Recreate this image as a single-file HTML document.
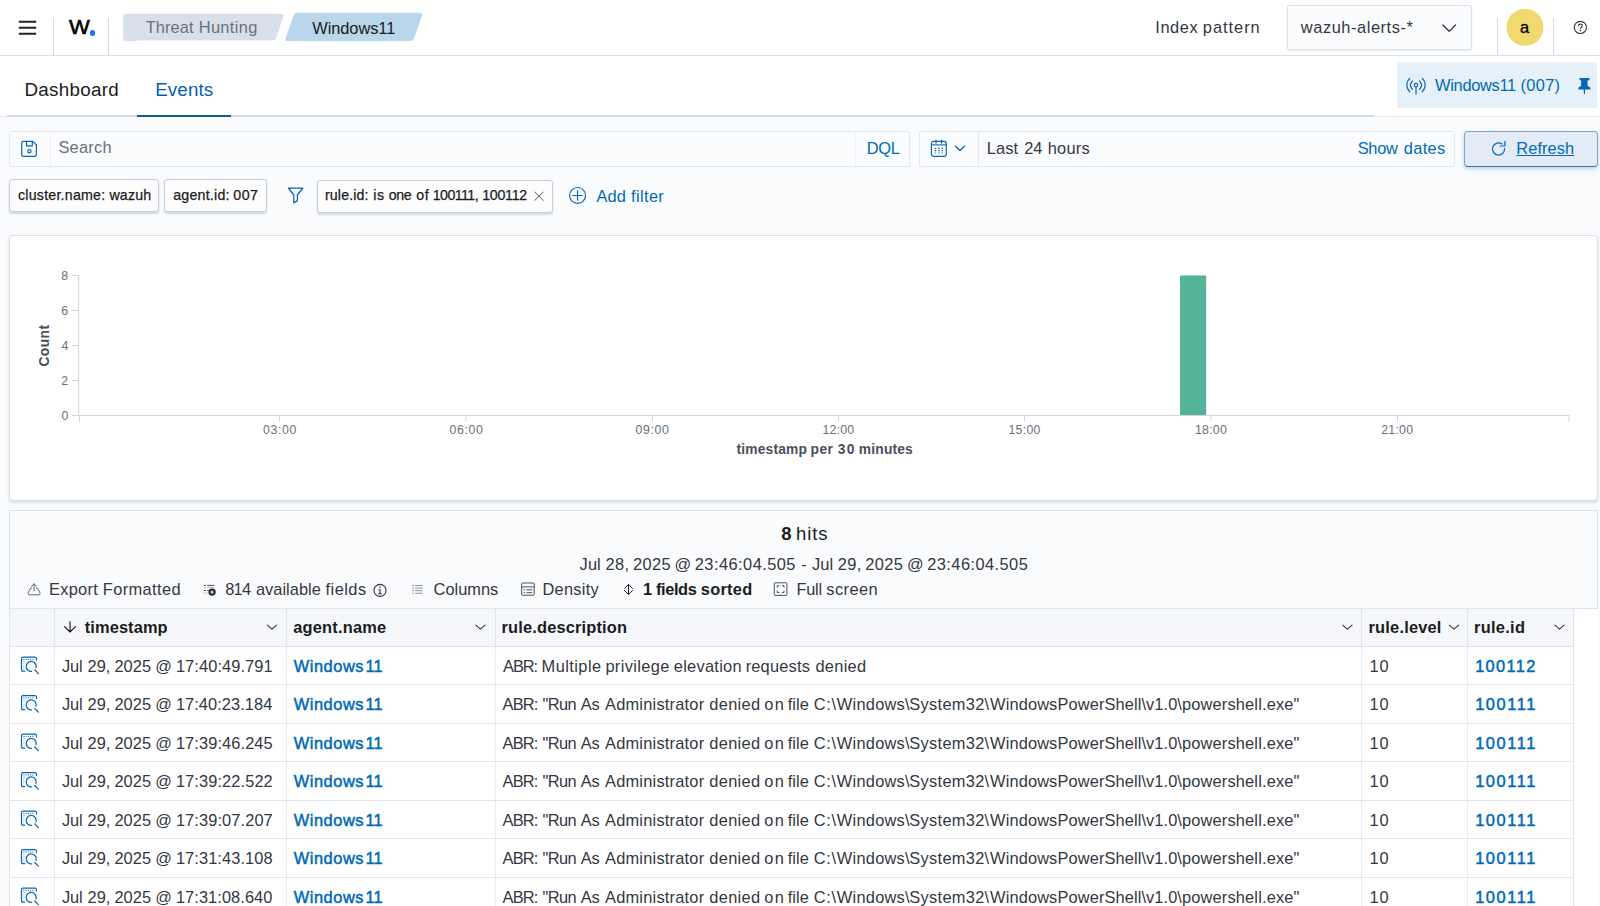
<!DOCTYPE html>
<html lang="en">
<head>
<meta charset="utf-8">
<title>Threat Hunting - Windows11 - Events</title>
<style>
html,body{margin:0;padding:0;}
body{width:1600px;height:906px;overflow:hidden;background:#fafbfd;font-family:"Liberation Sans",Arial,sans-serif;position:relative;}
#app{position:absolute;left:0;top:0;width:1600px;height:906px;overflow:hidden;}
#app div,#app span.t,#app svg{position:absolute;box-sizing:border-box;}
.t{white-space:pre;line-height:1;}
.ic{overflow:visible;}
/* header */
#hdr{left:0;top:0;width:1600px;height:56px;background:#fff;border-bottom:1px solid #d9e0ea;}
.vsep{width:1px;background:#d3dae6;top:18px;height:37px;}
#tabsbg{left:0;top:56px;width:1600px;height:61px;background:#fff;border-bottom:1px solid #e1e6ee;}
#tabline{left:7px;top:115px;width:1367px;height:2px;background:#d6dde8;}
#tabsel{left:137px;top:115px;width:94px;height:2px;background:#0f56ab;}
#agentpill{left:1397.2px;top:62.3px;width:200.3px;height:45.5px;background:#e6f0f8;}
#idxsel{left:1286.6px;top:5px;width:185.2px;height:45px;background:#fbfcfd;border:1px solid #dde3ec;border-radius:2px;box-shadow:0 1px 2px rgba(152,162,179,.25);}
#avatar{left:1506.6px;top:9px;width:36.7px;height:36.7px;border-radius:50%;background:#f1d86f;}
/* search row */
.box{background:#fbfcfd;border:1px solid #e3e8ef;border-radius:2px;}
#qbar{left:9.3px;top:130.5px;width:900.7px;height:36px;}
#dbar{left:919px;top:130.5px;width:535.5px;height:36px;}
.bsep{width:1px;background:#e3e8ef;top:131px;height:35px;}
#refresh{left:1464.3px;top:130.6px;width:133.9px;height:36.2px;background:#e3ecf6;border:1px solid #78a5d2;border-bottom-color:#2a7cc4;border-radius:4px;box-shadow:0 2px 4px rgba(40,80,130,.25);}
.pill{top:179px;height:33px;background:#fdfdfe;border:1px solid #c8d0dc;border-radius:3px;box-shadow:0 1.5px 2px rgba(110,125,150,.28);}
/* panels */
#chart{left:9.1px;top:235px;width:1589.3px;height:266px;background:#fff;border:1px solid #d9e0ea;border-radius:4px;box-shadow:0 2px 3px rgba(152,162,179,.35);}
#tpanel{left:9px;top:510px;width:1589px;height:420px;background:#fff;border-left:1px solid #dfe5ee;}
#tbar{left:9px;top:510px;width:1589px;height:98.6px;background:#fafbfd;border:1px solid #dbe1ea;}
#thead{left:10px;top:607.5px;width:1563.5px;height:39.1px;background:#f5f7fa;border-top:1.3px solid #e0e5ee;border-bottom:1.4px solid #dce2ec;}
#tright{left:1573px;top:608px;width:1px;height:300px;background:#dfe5ee;}
.vl{width:1px;background:#e8ecf2;top:646.4px;height:262px;}
.vh{width:1px;background:#dfe4ed;top:608.5px;height:37.5px;}
.hl{left:10px;width:1563.5px;height:1.2px;background:#e1e6ee;}
</style>
</head>
<body>
<div id="app">

<!-- ============ top header ============ -->
<div id="hdr"></div>
<svg class="ic" style="left:18px;top:20px" width="18" height="16" viewBox="-0.8 0 18 16"><path d="M0 1.8h17.4M0 7.7h17.4M0 13.7h17.4" stroke="#1f232b" stroke-width="2" fill="none"/></svg>
<div class="vsep" style="left:53px"></div>
<span class="t" style="left:69.1px;top:17.4px;font-size:20.6px;font-weight:400;color:#000;-webkit-text-stroke:0.6px #000;transform:scaleX(1.07);transform-origin:0 0">W</span>
<div style="left:90.2px;top:30.4px;width:5.2px;height:5.2px;border-radius:50%;background:#1a73ff"></div>
<div class="vsep" style="left:108px"></div>
<svg class="ic" style="left:120px;top:10px" width="310" height="34" viewBox="120 10 310 34">
  <path d="M126.2 13.8H281.1Q284.4 13.8 283.3 16.8L276.4 37.5Q275.4 40.5 272.2 40.5H126.2Q123.2 40.5 123.2 37.5V16.8Q123.2 13.8 126.2 13.8Z" fill="#d9dfea"/>
  <rect x="124.6" y="39.4" width="12" height="1.75" rx=".8" fill="#d9dfea"/>
  <path d="M297.6 12.8H419.6Q423 12.8 421.9 16L414.2 38.1Q413.2 41.1 410 41.1H288Q284.6 41.1 285.7 37.9L293.4 15.8Q294.4 12.8 297.6 12.8Z" fill="#b9d6ea"/>
</svg>
<div id="idxsel"></div>
<svg class="ic" style="left:1441px;top:22px" width="16" height="12" viewBox="-0.4 -0.2 16 12"><path d="M1.5 2.8L7.8 9L14.1 2.8" stroke="#343741" stroke-width="1.3" fill="none" stroke-linecap="round" stroke-linejoin="round"/></svg>
<div class="vsep" style="left:1497px"></div>
<svg class="ic" style="left:1500px;top:4px" width="50" height="48" viewBox="0 0 50 48"><circle cx="25" cy="23.4" r="18.45" fill="#f1d86f"/></svg>
<div class="vsep" style="left:1553px"></div>
<svg class="ic" style="left:1572px;top:19px" width="15" height="15" viewBox="-0.85 -0.95 15 15"><circle cx="7.5" cy="7.5" r="6.1" stroke="#343741" stroke-width="1.1" fill="none"/><path d="M5.6 6.1c0-1.1.8-1.9 1.9-1.9s1.9.7 1.9 1.7c0 1.3-1.8 1.5-1.8 2.9" stroke="#343741" stroke-width="1.1" fill="none" stroke-linecap="round"/><circle cx="7.55" cy="10.6" r=".75" fill="#343741"/></svg>

<!-- ============ tabs row ============ -->
<div id="tabsbg"></div>
<svg class="ic" style="left:0px;top:112px" width="1380" height="8" viewBox="0 0 1380 8"><path d="M7 4.1H1374" stroke="#cdd5e2" stroke-width="1.5" fill="none"/></svg>
<div id="tabsel"></div>
<div id="agentpill"></div>
<svg class="ic" style="left:1405px;top:76px" width="21" height="19" viewBox="-0.5 0 21 19" fill="none" stroke="#0a66b5" stroke-width="1.15" stroke-linecap="round">
  <circle cx="10.5" cy="9.1" r="1.75"/><path d="M10.5 10.9V18"/>
  <path d="M6.89 4.95A5.5 5.5 0 0 0 6.89 13.25M14.11 4.95A5.5 5.5 0 0 1 14.11 13.25"/>
  <path d="M4.26 2.41A9.15 9.15 0 0 0 4.26 15.79M16.74 2.41A9.15 9.15 0 0 1 16.74 15.79"/>
</svg>
<svg class="ic" style="left:1577px;top:77px" width="14" height="18" viewBox="-0.5 -0.5 14 18"><path d="M2.1.4h9.9v2.2l-1.9.4v5.3l2.8 1.9v1.9H7.5v4l-.6.8-.6-.8v-4H.8v-1.9l2.8-1.9V3l-1.5-.4z" fill="#0a66b5"/></svg>

<!-- ============ query bar ============ -->
<div id="qbar" class="box"></div>
<div class="bsep" style="left:50px;background:#eceff5"></div>
<div class="bsep" style="left:855px;background:#eef1f6"></div>
<svg class="ic" style="left:20px;top:140px" width="18" height="17" viewBox="-0.9 -0.6 18 17" fill="none" stroke="#0a66b5" stroke-width="1.2" stroke-linejoin="round"><path d="M2.5.8h9.3l3.7 3.6v9.6q0 1.8-1.7 1.8H2.5Q.8 15.8.8 14V2.6Q.8.8 2.5.8z"/><path d="M5.6 1v4.2h5.8V1"/><circle cx="8.5" cy="10.6" r="1.65"/></svg>
<div id="dbar" class="box"></div>
<div class="bsep" style="left:978px"></div>
<svg class="ic" style="left:930px;top:139px" width="18" height="19" viewBox="0 0 18 19" fill="none" stroke="#0a66b5" stroke-width="1.2"><rect x="1.4" y="2.45" width="14.9" height="14.85" rx="2.2"/><path d="M1.4 5.9h14.9" stroke-width="1.1"/><path d="M6 1.2v2.8M11.6 1.2v2.8" stroke-linecap="round" stroke-width="1.3"/><path d="M4.6 9.4h1.5M8.1 9.4h1.5M11.6 9.4h1.5M4.6 11.6h1.5M8.1 11.6h1.5M11.6 11.6h1.5" stroke-width="1.1"/><path d="M4.6 13.8h1.5M8.1 13.8h1.5M11.6 13.8h1.5" stroke-width="1.3" opacity=".55"/></svg>
<svg class="ic" style="left:954px;top:144px" width="12" height="8" viewBox="-0.4 -0.7 12 8"><path d="M1 1.6L5.5 5.8L10 1.6" stroke="#0a66b5" stroke-width="1.3" fill="none" stroke-linecap="round" stroke-linejoin="round"/></svg>
<div id="refresh"></div>
<svg class="ic" style="left:1490px;top:140px" width="17" height="17" viewBox="-0.5 0 17 17" fill="none" stroke="#0a66b5" stroke-width="1.2" stroke-linecap="round" stroke-linejoin="round"><path d="M11.55 3.96A6.1 6.1 0 1 0 14.14 8.64"/><path d="M14.4 1.3v4.7H9.7"/></svg>

<!-- ============ filter bar ============ -->
<div class="pill" style="left:9.3px;width:150.2px"></div>
<div class="pill" style="left:164.4px;width:102.5px"></div>
<svg class="ic" style="left:287px;top:187px" width="16" height="18" viewBox="-0.5 0 16 18"><path d="M.9 1h14.4L9.9 8v5.9L6.3 15.9V8z" fill="none" stroke="#0a66b5" stroke-width="1.25" stroke-linejoin="round"/></svg>
<div class="pill" style="left:317.2px;width:236.2px;top:179.6px"></div>
<svg class="ic" style="left:534px;top:191px" width="10" height="10" viewBox="0 -0.2 10 10"><path d="M.8.8l8.4 8.4M9.2.8L.8 9.2" stroke="#535966" stroke-width="1" stroke-linecap="round"/></svg>
<svg class="ic" style="left:568px;top:186px" width="18" height="18" viewBox="-0.55 -0.45 18 18" fill="none" stroke="#0a66b5" stroke-width="1.15" stroke-linecap="round"><circle cx="9" cy="9" r="7.95"/><path d="M9 4.2v9.6M4.2 9h9.6"/></svg>

<!-- ============ chart ============ -->
<div id="chart"></div>
<svg class="ic" style="left:0;top:235px" width="1600" height="266" viewBox="0 235 1600 266">
  <g stroke="#d4d6d9" stroke-width="1" fill="none">
    <path d="M78.6 275V415.5"/>
    <path d="M72 275.5H79M72 310.5H79M72 345.5H79M72 380.5H79M72 415.5H79"/>
    <path d="M79 415.5H1569.5"/>
    <path d="M79.5 415.5V422M279.5 415.5V421.5M466 415.5V421.5M652.5 415.5V421.5M838.5 415.5V421.5M1024.5 415.5V421.5M1211 415.5V421.5M1397.5 415.5V421.5M1569 415.5V422"/>
  </g>
  <rect x="1180" y="275.5" width="26.2" height="139.5" fill="#54b399"/>
  <text x="0" y="0" transform="translate(48.6 366.5) rotate(-90)" font-family="Liberation Sans, Arial, sans-serif" font-size="13.8" font-weight="700" fill="#4a4f5c" textLength="41.5" lengthAdjust="spacing">Count</text>
</svg>

<!-- ============ table ============ -->
<div id="tpanel"></div>
<div id="tbar"></div>
<div id="thead"></div>
<div class="vh" style="left:53.5px"></div><div class="vh" style="left:286px"></div><div class="vh" style="left:495px"></div><div class="vh" style="left:1361px"></div><div class="vh" style="left:1467px"></div>
<div class="vl" style="left:53.5px"></div><div class="vl" style="left:286px"></div><div class="vl" style="left:495px"></div><div class="vl" style="left:1361px"></div><div class="vl" style="left:1467px"></div>
<div id="tright"></div>
<div class="hl" style="top:684.00px"></div>
<div class="hl" style="top:722.50px"></div>
<div class="hl" style="top:761.00px"></div>
<div class="hl" style="top:799.50px"></div>
<div class="hl" style="top:838.00px"></div>
<div class="hl" style="top:876.50px"></div>

<!-- toolbar icons -->
<svg class="ic" style="left:27px;top:583px" width="14" height="13" viewBox="-0.3 0 14 13" fill="none" stroke="#5f6673" stroke-width="1" stroke-linecap="round" stroke-linejoin="round"><path d="M4.4 5.2H3.2L.9 9.6v1.3q0 .9.9.9h9.9q.9 0 .9-.9V9.6L10.3 5.2H9.1"/><path d="M6.75 8V.9M4.3 3.3L6.75.8l2.45 2.5"/></svg>
<svg class="ic" style="left:203px;top:583px" width="13" height="13" viewBox="-0.5 -0.5 13 13" fill="none" stroke="#343741" stroke-width=".9"><path d="M.4 1.9h2M3.6 1.9h7.1M.4 7h2M3.6 7h1.8"/><path d="M.4 4.1h2M3.6 4.1h7.1M.4 9.5h2M3.6 9.5h1" opacity=".4"/><circle cx="8.6" cy="8.6" r="2.65" stroke="#2a2d35" stroke-width="2.1" fill="#c3c7ce"/></svg>
<svg class="ic" style="left:373px;top:583px" width="14" height="14" viewBox="0 -0.4 14 14" fill="none" stroke="#343741" stroke-width="1.1"><circle cx="7" cy="7" r="6"/><path d="M7 6.2v4M5.8 6.4H7M5.6 10.4h2.8" stroke-linecap="round"/><circle cx="7" cy="3.9" r=".8" fill="#343741" stroke="none"/></svg>
<svg class="ic" style="left:411px;top:584px" width="12" height="10" viewBox="-0.8 -0.6 12 10" fill="none" stroke="#7b828e" stroke-width=".9"><path d="M.4 1h1.5M3.4 1h7.4M.4 3.55h1.5M3.4 3.55h7.4M.4 6.1h1.5M3.4 6.1h7.4M.4 8.65h1.5M3.4 8.65h7.4"/></svg>
<svg class="ic" style="left:521px;top:582px" width="14" height="14" viewBox="0 -0.3 14 14" fill="none" stroke="#4a505c" stroke-width="1"><rect x=".7" y=".7" width="12.5" height="12.2" rx=".7"/><path d="M.7 4.6h12.5M2.6 7.5h1.4M5.4 7.5h5.8M2.6 10.4h1.4M5.4 10.4h5.8"/></svg>
<svg class="ic" style="left:624px;top:583px" width="9" height="13" viewBox="0 0 9 13" fill="none" stroke="#1a1c21" stroke-width="1" stroke-linecap="round" stroke-linejoin="round"><path d="M4.5 1.6v9.7M.5 5.4L4.5 1.4l4 4M.5 7.5l4 4 4-4"/></svg>
<svg class="ic" style="left:773px;top:582px" width="14" height="14" viewBox="-0.6 -0.1 14 14" fill="none" stroke="#4a505c" stroke-width="1"><rect x=".7" y=".7" width="12.6" height="12.6" rx=".7"/><path d="M3.6 5.6v-2h2M8.4 3.6h2v2M10.4 8.4v2h-2M5.6 10.4h-2v-2"/></svg>

<!-- header icons -->
<svg class="ic" style="left:63px;top:620px" width="13" height="13" viewBox="-0.6 -0.6 13 13" fill="none" stroke="#1a1c21" stroke-width="1.15" stroke-linecap="round" stroke-linejoin="round"><path d="M6.45 1.1v10.2M1 6l5.45 5.4L11.9 6"/></svg>
<svg class="ic hc" style="left:266px;top:623px" width="12" height="8" viewBox="-0.35 -0.4 12 8"><path d="M1 1.7L5.6 5.8L10.2 1.7" stroke="#343741" stroke-width="1.1" fill="none" stroke-linecap="round" stroke-linejoin="round"/></svg>
<svg class="ic hc" style="left:474px;top:623px" width="12" height="8" viewBox="-0.85 -0.4 12 8"><path d="M1 1.7L5.6 5.8L10.2 1.7" stroke="#343741" stroke-width="1.1" fill="none" stroke-linecap="round" stroke-linejoin="round"/></svg>
<svg class="ic hc" style="left:1341px;top:623px" width="12" height="8" viewBox="-0.85 -0.4 12 8"><path d="M1 1.7L5.6 5.8L10.2 1.7" stroke="#343741" stroke-width="1.1" fill="none" stroke-linecap="round" stroke-linejoin="round"/></svg>
<svg class="ic hc" style="left:1448px;top:623px" width="12" height="8" viewBox="-0.35 -0.4 12 8"><path d="M1 1.7L5.6 5.8L10.2 1.7" stroke="#343741" stroke-width="1.1" fill="none" stroke-linecap="round" stroke-linejoin="round"/></svg>
<svg class="ic hc" style="left:1553px;top:623px" width="12" height="8" viewBox="-0.85 -0.4 12 8"><path d="M1 1.7L5.6 5.8L10.2 1.7" stroke="#343741" stroke-width="1.1" fill="none" stroke-linecap="round" stroke-linejoin="round"/></svg>

<svg class="ic" style="left:20px;top:655px" width="19" height="19" viewBox="-0.7 -0.9 19 19" fill="none" stroke="#0a66b5" stroke-width="1.2" stroke-linecap="round"><path d="M3.9 15.3H2.4Q.8 15.3 .8 13.7V2.8Q.8 1.2 2.4 1.2H14.2Q15.8 1.2 15.8 2.8V4"/><path d="M2.6 3.5H13.4" stroke-dasharray="1.1 1.15" stroke-linecap="butt" stroke-width="1"/><path d="M2.4 5.6H4.4M2.4 7.8H3.8M2.4 10.3H3.8M2.4 12.5H3.8" stroke-width=".8" stroke-linecap="butt" opacity=".45"/><path d="M10.9 15.5A5 5 0 1 1 15.3 12"/><path d="M14.1 14.1L17.7 17.7"/></svg>
<svg class="ic" style="left:20px;top:694px" width="19" height="19" viewBox="-0.7 -0.4 19 19" fill="none" stroke="#0a66b5" stroke-width="1.2" stroke-linecap="round"><path d="M3.9 15.3H2.4Q.8 15.3 .8 13.7V2.8Q.8 1.2 2.4 1.2H14.2Q15.8 1.2 15.8 2.8V4"/><path d="M2.6 3.5H13.4" stroke-dasharray="1.1 1.15" stroke-linecap="butt" stroke-width="1"/><path d="M2.4 5.6H4.4M2.4 7.8H3.8M2.4 10.3H3.8M2.4 12.5H3.8" stroke-width=".8" stroke-linecap="butt" opacity=".45"/><path d="M10.9 15.5A5 5 0 1 1 15.3 12"/><path d="M14.1 14.1L17.7 17.7"/></svg>
<svg class="ic" style="left:20px;top:732px" width="19" height="19" viewBox="-0.7 -0.9 19 19" fill="none" stroke="#0a66b5" stroke-width="1.2" stroke-linecap="round"><path d="M3.9 15.3H2.4Q.8 15.3 .8 13.7V2.8Q.8 1.2 2.4 1.2H14.2Q15.8 1.2 15.8 2.8V4"/><path d="M2.6 3.5H13.4" stroke-dasharray="1.1 1.15" stroke-linecap="butt" stroke-width="1"/><path d="M2.4 5.6H4.4M2.4 7.8H3.8M2.4 10.3H3.8M2.4 12.5H3.8" stroke-width=".8" stroke-linecap="butt" opacity=".45"/><path d="M10.9 15.5A5 5 0 1 1 15.3 12"/><path d="M14.1 14.1L17.7 17.7"/></svg>
<svg class="ic" style="left:20px;top:771px" width="19" height="19" viewBox="-0.7 -0.4 19 19" fill="none" stroke="#0a66b5" stroke-width="1.2" stroke-linecap="round"><path d="M3.9 15.3H2.4Q.8 15.3 .8 13.7V2.8Q.8 1.2 2.4 1.2H14.2Q15.8 1.2 15.8 2.8V4"/><path d="M2.6 3.5H13.4" stroke-dasharray="1.1 1.15" stroke-linecap="butt" stroke-width="1"/><path d="M2.4 5.6H4.4M2.4 7.8H3.8M2.4 10.3H3.8M2.4 12.5H3.8" stroke-width=".8" stroke-linecap="butt" opacity=".45"/><path d="M10.9 15.5A5 5 0 1 1 15.3 12"/><path d="M14.1 14.1L17.7 17.7"/></svg>
<svg class="ic" style="left:20px;top:809px" width="19" height="19" viewBox="-0.7 -0.9 19 19" fill="none" stroke="#0a66b5" stroke-width="1.2" stroke-linecap="round"><path d="M3.9 15.3H2.4Q.8 15.3 .8 13.7V2.8Q.8 1.2 2.4 1.2H14.2Q15.8 1.2 15.8 2.8V4"/><path d="M2.6 3.5H13.4" stroke-dasharray="1.1 1.15" stroke-linecap="butt" stroke-width="1"/><path d="M2.4 5.6H4.4M2.4 7.8H3.8M2.4 10.3H3.8M2.4 12.5H3.8" stroke-width=".8" stroke-linecap="butt" opacity=".45"/><path d="M10.9 15.5A5 5 0 1 1 15.3 12"/><path d="M14.1 14.1L17.7 17.7"/></svg>
<svg class="ic" style="left:20px;top:848px" width="19" height="19" viewBox="-0.7 -0.4 19 19" fill="none" stroke="#0a66b5" stroke-width="1.2" stroke-linecap="round"><path d="M3.9 15.3H2.4Q.8 15.3 .8 13.7V2.8Q.8 1.2 2.4 1.2H14.2Q15.8 1.2 15.8 2.8V4"/><path d="M2.6 3.5H13.4" stroke-dasharray="1.1 1.15" stroke-linecap="butt" stroke-width="1"/><path d="M2.4 5.6H4.4M2.4 7.8H3.8M2.4 10.3H3.8M2.4 12.5H3.8" stroke-width=".8" stroke-linecap="butt" opacity=".45"/><path d="M10.9 15.5A5 5 0 1 1 15.3 12"/><path d="M14.1 14.1L17.7 17.7"/></svg>
<svg class="ic" style="left:20px;top:886px" width="19" height="19" viewBox="-0.7 -0.9 19 19" fill="none" stroke="#0a66b5" stroke-width="1.2" stroke-linecap="round"><path d="M3.9 15.3H2.4Q.8 15.3 .8 13.7V2.8Q.8 1.2 2.4 1.2H14.2Q15.8 1.2 15.8 2.8V4"/><path d="M2.6 3.5H13.4" stroke-dasharray="1.1 1.15" stroke-linecap="butt" stroke-width="1"/><path d="M2.4 5.6H4.4M2.4 7.8H3.8M2.4 10.3H3.8M2.4 12.5H3.8" stroke-width=".8" stroke-linecap="butt" opacity=".45"/><path d="M10.9 15.5A5 5 0 1 1 15.3 12"/><path d="M14.1 14.1L17.7 17.7"/></svg>

<!-- ============ all text ============ -->
<span class="t" style="left:145.75px;top:19.00px;font-size:16.4px;color:#69707d;"><span class="w" style="letter-spacing:0.064px;">Threat </span><span class="w" style="margin-left:0.64px;letter-spacing:0.333px;">Hunting</span></span>
<span class="t" style="left:312.26px;top:20.00px;font-size:16.4px;color:#1a1c21;letter-spacing:-0.062px;">Windows11</span>
<span class="t" style="left:1155.28px;top:19.00px;font-size:16.4px;color:#343741;"><span class="w" style="letter-spacing:0.559px;">Index </span><span class="w" style="margin-left:-0.45px;letter-spacing:0.969px;">pattern</span></span>
<span class="t" style="left:1300.82px;top:19.00px;font-size:16.4px;color:#343741;letter-spacing:0.561px;">wazuh-alerts-*</span>
<span class="t" style="left:1520.10px;top:19.00px;font-size:16.4px;color:#000;-webkit-text-stroke:0.3px #000;">a</span>
<span class="t" style="left:24.49px;top:81.00px;font-size:18.8px;color:#1a1c21;letter-spacing:0.303px;">Dashboard</span>
<span class="t" style="left:155.17px;top:81.00px;font-size:18.8px;color:#0361b0;letter-spacing:0.132px;">Events</span>
<span class="t" style="left:1435.10px;top:77.00px;font-size:16.4px;color:#006bb4;"><span class="w" style="letter-spacing:-0.304px;">Windows11 </span><span class="w" style="margin-left:0.47px;letter-spacing:0.301px;">(007)</span></span>
<span class="t" style="left:58.39px;top:139.00px;font-size:16.4px;color:#69707d;letter-spacing:0.258px;">Search</span>
<span class="t" style="left:866.84px;top:140.00px;font-size:16.4px;color:#006bb4;letter-spacing:-0.332px;">DQL</span>
<span class="t" style="left:986.77px;top:140.00px;font-size:16.4px;color:#343741;"><span class="w" style="letter-spacing:0.092px;">Last </span><span class="w" style="margin-left:1.53px;letter-spacing:-0.170px;">24 </span><span class="w" style="margin-left:1.09px;letter-spacing:0.294px;">hours</span></span>
<span class="t" style="left:1357.66px;top:140.00px;font-size:16.4px;color:#006bb4;"><span class="w" style="letter-spacing:-0.282px;">Show </span><span class="w" style="margin-left:1.94px;letter-spacing:0.326px;">dates</span></span>
<span class="t" style="left:1516.37px;top:140.00px;font-size:16.4px;color:#006bb4;letter-spacing:0.061px;text-decoration:underline;text-underline-offset:1.2px;text-decoration-thickness:1px;">Refresh</span>
<span class="t" style="left:17.97px;top:188.00px;font-size:14.2px;color:#1a1c21;-webkit-text-stroke:0.25px #1a1c21;"><span class="w" style="letter-spacing:0.236px;">cluster.name: </span><span class="w" style="margin-left:-0.16px;letter-spacing:0.176px;">wazuh</span></span>
<span class="t" style="left:173.23px;top:188.00px;font-size:14.2px;color:#1a1c21;-webkit-text-stroke:0.25px #1a1c21;"><span class="w" style="letter-spacing:0.224px;">agent.id: </span><span class="w" style="margin-left:-0.60px;letter-spacing:0.526px;">007</span></span>
<span class="t" style="left:324.91px;top:188.00px;font-size:14.2px;color:#1a1c21;-webkit-text-stroke:0.25px #1a1c21;"><span class="w" style="letter-spacing:0.151px;">rule.id: </span><span class="w" style="margin-left:0.46px;letter-spacing:0.604px;">is </span><span class="w" style="margin-left:-0.52px;letter-spacing:-0.350px;">one </span><span class="w" style="margin-left:1.31px;letter-spacing:0.597px;">of </span><span class="w" style="margin-left:-1.14px;letter-spacing:-0.540px;">100111, </span><span class="w" style="margin-left:0.64px;letter-spacing:-0.249px;">100112</span></span>
<span class="t" style="left:596.61px;top:188.00px;font-size:16.4px;color:#006bb4;"><span class="w" style="letter-spacing:0.057px;">Add </span><span class="w" style="margin-left:0.53px;letter-spacing:0.358px;">filter</span></span>
<span class="t" style="left:781.23px;top:525.00px;font-size:18.5px;font-weight:700;color:#1a1c21;"><span class="w" style="letter-spacing:-2.888px;">8 </span><span class="w" style="margin-left:5.16px;letter-spacing:0.925px;font-weight:400;">hits</span></span>
<span class="t" style="left:579.58px;top:556.00px;font-size:16.4px;color:#343741;"><span class="w" style="letter-spacing:0.103px;">Jul </span><span class="w" style="margin-left:0.03px;letter-spacing:0.362px;">28, </span><span class="w" style="margin-left:-1.42px;letter-spacing:0.440px;">2025 </span><span class="w" style="margin-left:-1.53px;letter-spacing:-5.013px;">@ </span><span class="w" style="margin-left:9.02px;letter-spacing:0.453px;">23:46:04.505 </span><span class="w" style="margin-left:0.25px;letter-spacing:-3.976px;">- </span><span class="w" style="margin-left:8.67px;letter-spacing:0.179px;">Jul </span><span class="w" style="margin-left:-0.37px;letter-spacing:0.318px;">29, </span><span class="w" style="margin-left:-1.12px;letter-spacing:0.344px;">2025 </span><span class="w" style="margin-left:-1.12px;letter-spacing:-5.063px;">@ </span><span class="w" style="margin-left:9.19px;letter-spacing:0.443px;">23:46:04.505</span></span>
<span class="t" style="left:49.02px;top:581.00px;font-size:16.4px;color:#343741;"><span class="w" style="letter-spacing:0.266px;">Export </span><span class="w" style="margin-left:0.03px;letter-spacing:0.386px;">Formatted</span></span>
<span class="t" style="left:225.14px;top:581.00px;font-size:16.4px;color:#343741;"><span class="w" style="letter-spacing:-0.616px;">814 </span><span class="w" style="margin-left:1.37px;letter-spacing:0.025px;">available </span><span class="w" style="margin-left:0.13px;letter-spacing:0.464px;">fields</span></span>
<span class="t" style="left:433.57px;top:581.00px;font-size:16.4px;color:#343741;letter-spacing:0.007px;">Columns</span>
<span class="t" style="left:542.54px;top:581.00px;font-size:16.4px;color:#343741;letter-spacing:0.253px;">Density</span>
<span class="t" style="left:642.95px;top:581.00px;font-size:16.4px;font-weight:700;color:#1a1c21;"><span class="w" style="letter-spacing:-5.532px;">1 </span><span class="w" style="margin-left:10.48px;letter-spacing:-0.399px;">fields </span><span class="w" style="margin-left:0.28px;letter-spacing:0.239px;">sorted</span></span>
<span class="t" style="left:796.54px;top:581.00px;font-size:16.4px;color:#343741;"><span class="w" style="letter-spacing:-0.272px;">Full </span><span class="w" style="margin-left:0.11px;letter-spacing:0.430px;">screen</span></span>
<span class="t" style="left:84.72px;top:619.00px;font-size:16.4px;font-weight:700;color:#1a1c21;letter-spacing:0.117px;">timestamp</span>
<span class="t" style="left:293.21px;top:619.00px;font-size:16.4px;font-weight:700;color:#1a1c21;letter-spacing:0.212px;">agent.name</span>
<span class="t" style="left:501.51px;top:619.00px;font-size:16.4px;font-weight:700;color:#1a1c21;letter-spacing:0.171px;">rule.description</span>
<span class="t" style="left:1368.51px;top:619.00px;font-size:16.4px;font-weight:700;color:#1a1c21;letter-spacing:0.205px;">rule.level</span>
<span class="t" style="left:1473.99px;top:619.00px;font-size:16.4px;font-weight:700;color:#1a1c21;letter-spacing:0.305px;">rule.id</span>
<span class="t" style="left:61.93px;top:658.00px;font-size:16.4px;color:#343741;"><span class="w" style="letter-spacing:-0.060px;">Jul </span><span class="w" style="margin-left:0.29px;letter-spacing:0.031px;">29, </span><span class="w" style="margin-left:-0.58px;letter-spacing:0.120px;">2025 </span><span class="w" style="margin-left:-0.84px;letter-spacing:-5.113px;">@ </span><span class="w" style="margin-left:9.76px;letter-spacing:0.096px;">17:40:49.791</span></span>
<span class="t" style="left:293.72px;top:658.00px;font-size:16.4px;color:#006bb4;-webkit-text-stroke:0.5px #006bb4;"><span class="w" style="letter-spacing:0.551px;">Windows</span><span class="w" style="margin-left:1.52px;letter-spacing:-0.063px;">11</span></span>
<span class="t" style="left:503.08px;top:658.00px;font-size:16.4px;color:#343741;"><span class="w" style="letter-spacing:-1.079px;">ABR: </span><span class="w" style="margin-left:1.04px;letter-spacing:0.446px;">Multiple </span><span class="w" style="margin-left:-1.21px;letter-spacing:0.383px;">privilege </span><span class="w" style="margin-left:-1.01px;letter-spacing:0.269px;">elevation </span><span class="w" style="margin-left:-1.04px;letter-spacing:0.203px;">requests </span><span class="w" style="margin-left:0.52px;letter-spacing:0.303px;">denied</span></span>
<span class="t" style="left:1369.56px;top:658.00px;font-size:16.4px;color:#343741;letter-spacing:0.865px;">10</span>
<span class="t" style="left:1475.16px;top:658.00px;font-size:16.4px;color:#006bb4;letter-spacing:1.344px;-webkit-text-stroke:0.5px #006bb4;">100112</span>
<span class="t" style="left:61.93px;top:696.00px;font-size:16.4px;color:#343741;"><span class="w" style="letter-spacing:-0.060px;">Jul </span><span class="w" style="margin-left:0.29px;letter-spacing:0.031px;">29, </span><span class="w" style="margin-left:-0.58px;letter-spacing:0.120px;">2025 </span><span class="w" style="margin-left:-0.84px;letter-spacing:-5.113px;">@ </span><span class="w" style="margin-left:9.76px;letter-spacing:0.062px;">17:40:23.184</span></span>
<span class="t" style="left:293.72px;top:696.00px;font-size:16.4px;color:#006bb4;-webkit-text-stroke:0.5px #006bb4;"><span class="w" style="letter-spacing:0.551px;">Windows</span><span class="w" style="margin-left:1.52px;letter-spacing:-0.063px;">11</span></span>
<span class="t" style="left:502.61px;top:696.00px;font-size:16.4px;color:#343741;"><span class="w" style="letter-spacing:-0.835px;">ABR: </span><span class="w" style="margin-left:1.33px;letter-spacing:-0.625px;">&quot;Run </span><span class="w" style="margin-left:0.96px;letter-spacing:-0.259px;">As </span><span class="w" style="margin-left:1.27px;letter-spacing:0.211px;">Administrator </span><span class="w" style="margin-left:0.18px;letter-spacing:0.331px;">denied </span><span class="w" style="margin-left:-1.19px;letter-spacing:1.426px;">on </span><span class="w" style="margin-left:-3.53px;letter-spacing:0.079px;">file </span><span class="w" style="margin-left:0.20px;letter-spacing:0.617px;">C:\</span><span class="w" style="margin-left:0.24px;letter-spacing:0.236px;">Windows\</span><span class="w" style="margin-left:-0.47px;letter-spacing:0.301px;">System32\</span><span class="w" style="margin-left:0.61px;letter-spacing:0.120px;">WindowsPowerShell\</span><span class="w" style="margin-left:-0.19px;letter-spacing:0.092px;">v1.0\</span><span class="w" style="margin-left:0.01px;letter-spacing:0.156px;">powershell.exe&quot;</span></span>
<span class="t" style="left:1369.56px;top:696.00px;font-size:16.4px;color:#343741;letter-spacing:0.865px;">10</span>
<span class="t" style="left:1475.16px;top:696.00px;font-size:16.4px;color:#006bb4;letter-spacing:1.571px;-webkit-text-stroke:0.5px #006bb4;">100111</span>
<span class="t" style="left:61.93px;top:735.00px;font-size:16.4px;color:#343741;"><span class="w" style="letter-spacing:-0.060px;">Jul </span><span class="w" style="margin-left:0.29px;letter-spacing:0.031px;">29, </span><span class="w" style="margin-left:-0.58px;letter-spacing:0.120px;">2025 </span><span class="w" style="margin-left:-0.84px;letter-spacing:-5.113px;">@ </span><span class="w" style="margin-left:9.76px;letter-spacing:0.101px;">17:39:46.245</span></span>
<span class="t" style="left:293.72px;top:735.00px;font-size:16.4px;color:#006bb4;-webkit-text-stroke:0.5px #006bb4;"><span class="w" style="letter-spacing:0.551px;">Windows</span><span class="w" style="margin-left:1.52px;letter-spacing:-0.063px;">11</span></span>
<span class="t" style="left:502.61px;top:735.00px;font-size:16.4px;color:#343741;"><span class="w" style="letter-spacing:-0.835px;">ABR: </span><span class="w" style="margin-left:1.33px;letter-spacing:-0.625px;">&quot;Run </span><span class="w" style="margin-left:0.96px;letter-spacing:-0.259px;">As </span><span class="w" style="margin-left:1.27px;letter-spacing:0.211px;">Administrator </span><span class="w" style="margin-left:0.18px;letter-spacing:0.331px;">denied </span><span class="w" style="margin-left:-1.19px;letter-spacing:1.426px;">on </span><span class="w" style="margin-left:-3.53px;letter-spacing:0.079px;">file </span><span class="w" style="margin-left:0.20px;letter-spacing:0.617px;">C:\</span><span class="w" style="margin-left:0.24px;letter-spacing:0.236px;">Windows\</span><span class="w" style="margin-left:-0.47px;letter-spacing:0.301px;">System32\</span><span class="w" style="margin-left:0.61px;letter-spacing:0.120px;">WindowsPowerShell\</span><span class="w" style="margin-left:-0.19px;letter-spacing:0.092px;">v1.0\</span><span class="w" style="margin-left:0.01px;letter-spacing:0.156px;">powershell.exe&quot;</span></span>
<span class="t" style="left:1369.56px;top:735.00px;font-size:16.4px;color:#343741;letter-spacing:0.865px;">10</span>
<span class="t" style="left:1475.16px;top:735.00px;font-size:16.4px;color:#006bb4;letter-spacing:1.571px;-webkit-text-stroke:0.5px #006bb4;">100111</span>
<span class="t" style="left:61.93px;top:773.00px;font-size:16.4px;color:#343741;"><span class="w" style="letter-spacing:-0.060px;">Jul </span><span class="w" style="margin-left:0.29px;letter-spacing:0.031px;">29, </span><span class="w" style="margin-left:-0.58px;letter-spacing:0.120px;">2025 </span><span class="w" style="margin-left:-0.84px;letter-spacing:-5.113px;">@ </span><span class="w" style="margin-left:9.76px;letter-spacing:0.102px;">17:39:22.522</span></span>
<span class="t" style="left:293.72px;top:773.00px;font-size:16.4px;color:#006bb4;-webkit-text-stroke:0.5px #006bb4;"><span class="w" style="letter-spacing:0.551px;">Windows</span><span class="w" style="margin-left:1.52px;letter-spacing:-0.063px;">11</span></span>
<span class="t" style="left:502.61px;top:773.00px;font-size:16.4px;color:#343741;"><span class="w" style="letter-spacing:-0.835px;">ABR: </span><span class="w" style="margin-left:1.33px;letter-spacing:-0.625px;">&quot;Run </span><span class="w" style="margin-left:0.96px;letter-spacing:-0.259px;">As </span><span class="w" style="margin-left:1.27px;letter-spacing:0.211px;">Administrator </span><span class="w" style="margin-left:0.18px;letter-spacing:0.331px;">denied </span><span class="w" style="margin-left:-1.19px;letter-spacing:1.426px;">on </span><span class="w" style="margin-left:-3.53px;letter-spacing:0.079px;">file </span><span class="w" style="margin-left:0.20px;letter-spacing:0.617px;">C:\</span><span class="w" style="margin-left:0.24px;letter-spacing:0.236px;">Windows\</span><span class="w" style="margin-left:-0.47px;letter-spacing:0.301px;">System32\</span><span class="w" style="margin-left:0.61px;letter-spacing:0.120px;">WindowsPowerShell\</span><span class="w" style="margin-left:-0.19px;letter-spacing:0.092px;">v1.0\</span><span class="w" style="margin-left:0.01px;letter-spacing:0.156px;">powershell.exe&quot;</span></span>
<span class="t" style="left:1369.56px;top:773.00px;font-size:16.4px;color:#343741;letter-spacing:0.865px;">10</span>
<span class="t" style="left:1475.16px;top:773.00px;font-size:16.4px;color:#006bb4;letter-spacing:1.571px;-webkit-text-stroke:0.5px #006bb4;">100111</span>
<span class="t" style="left:61.93px;top:812.00px;font-size:16.4px;color:#343741;"><span class="w" style="letter-spacing:-0.060px;">Jul </span><span class="w" style="margin-left:0.29px;letter-spacing:0.031px;">29, </span><span class="w" style="margin-left:-0.58px;letter-spacing:0.120px;">2025 </span><span class="w" style="margin-left:-0.84px;letter-spacing:-5.113px;">@ </span><span class="w" style="margin-left:9.76px;letter-spacing:0.102px;">17:39:07.207</span></span>
<span class="t" style="left:293.72px;top:812.00px;font-size:16.4px;color:#006bb4;-webkit-text-stroke:0.5px #006bb4;"><span class="w" style="letter-spacing:0.551px;">Windows</span><span class="w" style="margin-left:1.52px;letter-spacing:-0.063px;">11</span></span>
<span class="t" style="left:502.61px;top:812.00px;font-size:16.4px;color:#343741;"><span class="w" style="letter-spacing:-0.835px;">ABR: </span><span class="w" style="margin-left:1.33px;letter-spacing:-0.625px;">&quot;Run </span><span class="w" style="margin-left:0.96px;letter-spacing:-0.259px;">As </span><span class="w" style="margin-left:1.27px;letter-spacing:0.211px;">Administrator </span><span class="w" style="margin-left:0.18px;letter-spacing:0.331px;">denied </span><span class="w" style="margin-left:-1.19px;letter-spacing:1.426px;">on </span><span class="w" style="margin-left:-3.53px;letter-spacing:0.079px;">file </span><span class="w" style="margin-left:0.20px;letter-spacing:0.617px;">C:\</span><span class="w" style="margin-left:0.24px;letter-spacing:0.236px;">Windows\</span><span class="w" style="margin-left:-0.47px;letter-spacing:0.301px;">System32\</span><span class="w" style="margin-left:0.61px;letter-spacing:0.120px;">WindowsPowerShell\</span><span class="w" style="margin-left:-0.19px;letter-spacing:0.092px;">v1.0\</span><span class="w" style="margin-left:0.01px;letter-spacing:0.156px;">powershell.exe&quot;</span></span>
<span class="t" style="left:1369.56px;top:812.00px;font-size:16.4px;color:#343741;letter-spacing:0.865px;">10</span>
<span class="t" style="left:1475.16px;top:812.00px;font-size:16.4px;color:#006bb4;letter-spacing:1.571px;-webkit-text-stroke:0.5px #006bb4;">100111</span>
<span class="t" style="left:61.93px;top:850.00px;font-size:16.4px;color:#343741;"><span class="w" style="letter-spacing:-0.060px;">Jul </span><span class="w" style="margin-left:0.29px;letter-spacing:0.031px;">29, </span><span class="w" style="margin-left:-0.58px;letter-spacing:0.120px;">2025 </span><span class="w" style="margin-left:-0.84px;letter-spacing:-5.113px;">@ </span><span class="w" style="margin-left:9.76px;letter-spacing:0.087px;">17:31:43.108</span></span>
<span class="t" style="left:293.72px;top:850.00px;font-size:16.4px;color:#006bb4;-webkit-text-stroke:0.5px #006bb4;"><span class="w" style="letter-spacing:0.551px;">Windows</span><span class="w" style="margin-left:1.52px;letter-spacing:-0.063px;">11</span></span>
<span class="t" style="left:502.61px;top:850.00px;font-size:16.4px;color:#343741;"><span class="w" style="letter-spacing:-0.835px;">ABR: </span><span class="w" style="margin-left:1.33px;letter-spacing:-0.625px;">&quot;Run </span><span class="w" style="margin-left:0.96px;letter-spacing:-0.259px;">As </span><span class="w" style="margin-left:1.27px;letter-spacing:0.211px;">Administrator </span><span class="w" style="margin-left:0.18px;letter-spacing:0.331px;">denied </span><span class="w" style="margin-left:-1.19px;letter-spacing:1.426px;">on </span><span class="w" style="margin-left:-3.53px;letter-spacing:0.079px;">file </span><span class="w" style="margin-left:0.20px;letter-spacing:0.617px;">C:\</span><span class="w" style="margin-left:0.24px;letter-spacing:0.236px;">Windows\</span><span class="w" style="margin-left:-0.47px;letter-spacing:0.301px;">System32\</span><span class="w" style="margin-left:0.61px;letter-spacing:0.120px;">WindowsPowerShell\</span><span class="w" style="margin-left:-0.19px;letter-spacing:0.092px;">v1.0\</span><span class="w" style="margin-left:0.01px;letter-spacing:0.156px;">powershell.exe&quot;</span></span>
<span class="t" style="left:1369.56px;top:850.00px;font-size:16.4px;color:#343741;letter-spacing:0.865px;">10</span>
<span class="t" style="left:1475.16px;top:850.00px;font-size:16.4px;color:#006bb4;letter-spacing:1.571px;-webkit-text-stroke:0.5px #006bb4;">100111</span>
<span class="t" style="left:61.93px;top:889.00px;font-size:16.4px;color:#343741;"><span class="w" style="letter-spacing:-0.060px;">Jul </span><span class="w" style="margin-left:0.29px;letter-spacing:0.031px;">29, </span><span class="w" style="margin-left:-0.58px;letter-spacing:0.120px;">2025 </span><span class="w" style="margin-left:-0.84px;letter-spacing:-5.113px;">@ </span><span class="w" style="margin-left:9.76px;letter-spacing:0.073px;">17:31:08.640</span></span>
<span class="t" style="left:293.72px;top:889.00px;font-size:16.4px;color:#006bb4;-webkit-text-stroke:0.5px #006bb4;"><span class="w" style="letter-spacing:0.551px;">Windows</span><span class="w" style="margin-left:1.52px;letter-spacing:-0.063px;">11</span></span>
<span class="t" style="left:502.61px;top:889.00px;font-size:16.4px;color:#343741;"><span class="w" style="letter-spacing:-0.835px;">ABR: </span><span class="w" style="margin-left:1.33px;letter-spacing:-0.625px;">&quot;Run </span><span class="w" style="margin-left:0.96px;letter-spacing:-0.259px;">As </span><span class="w" style="margin-left:1.27px;letter-spacing:0.211px;">Administrator </span><span class="w" style="margin-left:0.18px;letter-spacing:0.331px;">denied </span><span class="w" style="margin-left:-1.19px;letter-spacing:1.426px;">on </span><span class="w" style="margin-left:-3.53px;letter-spacing:0.079px;">file </span><span class="w" style="margin-left:0.20px;letter-spacing:0.617px;">C:\</span><span class="w" style="margin-left:0.24px;letter-spacing:0.236px;">Windows\</span><span class="w" style="margin-left:-0.47px;letter-spacing:0.301px;">System32\</span><span class="w" style="margin-left:0.61px;letter-spacing:0.120px;">WindowsPowerShell\</span><span class="w" style="margin-left:-0.19px;letter-spacing:0.092px;">v1.0\</span><span class="w" style="margin-left:0.01px;letter-spacing:0.156px;">powershell.exe&quot;</span></span>
<span class="t" style="left:1369.56px;top:889.00px;font-size:16.4px;color:#343741;letter-spacing:0.865px;">10</span>
<span class="t" style="left:1475.16px;top:889.00px;font-size:16.4px;color:#006bb4;letter-spacing:1.571px;-webkit-text-stroke:0.5px #006bb4;">100111</span>
<span class="t" style="left:61.36px;top:270.00px;font-size:12.3px;color:#69707d;">8</span>
<span class="t" style="left:61.37px;top:305.00px;font-size:12.3px;color:#69707d;">6</span>
<span class="t" style="left:61.47px;top:340.00px;font-size:12.3px;color:#69707d;">4</span>
<span class="t" style="left:61.36px;top:375.00px;font-size:12.3px;color:#69707d;">2</span>
<span class="t" style="left:61.39px;top:410.00px;font-size:12.3px;color:#69707d;">0</span>
<span class="t" style="left:263.00px;top:424.00px;font-size:12.3px;color:#69707d;letter-spacing:0.644px;">03:00</span>
<span class="t" style="left:449.45px;top:424.00px;font-size:12.3px;color:#69707d;letter-spacing:0.641px;">06:00</span>
<span class="t" style="left:635.49px;top:424.00px;font-size:12.3px;color:#69707d;letter-spacing:0.622px;">09:00</span>
<span class="t" style="left:822.55px;top:424.00px;font-size:12.3px;color:#69707d;letter-spacing:0.213px;">12:00</span>
<span class="t" style="left:1008.51px;top:424.00px;font-size:12.3px;color:#69707d;letter-spacing:0.265px;">15:00</span>
<span class="t" style="left:1194.95px;top:424.00px;font-size:12.3px;color:#69707d;letter-spacing:0.266px;">18:00</span>
<span class="t" style="left:1381.17px;top:424.00px;font-size:12.3px;color:#69707d;letter-spacing:0.286px;">21:00</span>
<span class="t" style="left:736.55px;top:443.00px;font-size:13.8px;font-weight:700;color:#4a4f5c;"><span class="w" style="letter-spacing:0.176px;">timestamp </span><span class="w" style="margin-left:-0.58px;letter-spacing:0.395px;">per </span><span class="w" style="margin-left:0.38px;letter-spacing:1.339px;">30 </span><span class="w" style="margin-left:-2.23px;letter-spacing:0.177px;">minutes</span></span>

</div>
</body>
</html>
